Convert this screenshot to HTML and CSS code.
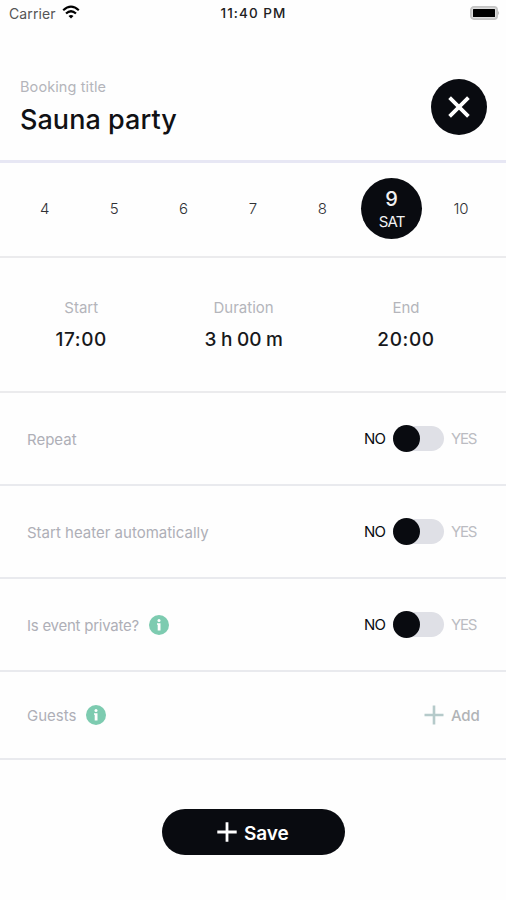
FILE: index.html
```html
<!DOCTYPE html>
<html lang="en">
<head>
<meta charset="utf-8">
<title>Booking</title>
<link rel="stylesheet" href="styles.css">
</head>
<body>
<main class="screen">
  <div class="status">
    <div class="carrier"><span class="carrier-name">Carrier</span>
      <svg class="wifi" viewBox="0 0 18 14"><path d="M1.2 5.2Q9-1.8 16.8 5.2M4 8.5Q9 4 14 8.5" fill="none" stroke="#000" stroke-width="2.2"/><path d="M6.5 10.9Q9 9 11.5 10.9L9 13.4Z"/></svg>
    </div>
    <span class="clock">11:40 PM</span>
    <svg class="battery" viewBox="0 0 30 14"><rect x=".9" y=".9" width="26.2" height="12.2" rx="3" fill="#ddd" stroke="#c4c4c4" stroke-width="1.8"/><rect x="3" y="3" width="22" height="8" rx=".5" fill="#000"/><path d="M28.2 4.8Q30 7 28.2 9.2Z" fill="#aaa"/></svg>
  </div>
  <header class="header">
    <div class="heading">
      <span class="caption">Booking title</span>
      <h1 class="title">Sauna party</h1>
    </div>
    <button class="close" aria-label="Close"><svg viewBox="0 0 22 22"><path d="M1.6 1.6L20.4 20.4M20.4 1.6L1.6 20.4" stroke="#fff" stroke-width="3.8"/></svg></button>
  </header>
  <nav class="days">
    <span class="day">4</span><span class="day">5</span><span class="day">6</span><span class="day">7</span><span class="day">8</span>
    <span class="day selected"><b class="number">9</b><span class="weekday">SAT</span></span>
    <span class="day">10</span>
  </nav>
  <section class="times">
    <div class="time"><span class="label">Start</span><span class="value start">17:00</span></div>
    <div class="time"><span class="label">Duration</span><span class="value duration">3 h 00 m</span></div>
    <div class="time"><span class="label">End</span><span class="value end">20:00</span></div>
  </section>
  <section class="row">
    <span class="name">Repeat</span>
    <div class="choice"><span class="no">NO</span><span class="track"><span class="knob"></span></span><span class="yes">YES</span></div>
  </section>
  <section class="row">
    <span class="name">Start heater automatically</span>
    <div class="choice"><span class="no">NO</span><span class="track"><span class="knob"></span></span><span class="yes">YES</span></div>
  </section>
  <section class="row">
    <span class="name private">Is event private?</span>
    <svg class="info" viewBox="0 0 20 20"><circle cx="10" cy="10" r="10" fill="#7dcbb0"/><circle cx="10" cy="5.4" r="1.5" fill="#fff"/><path d="M8 8.2H11.5V15.6H8.7V9.8H8Z" fill="#fff"/></svg>
    <div class="choice"><span class="no">NO</span><span class="track"><span class="knob"></span></span><span class="yes">YES</span></div>
  </section>
  <section class="row guests-row">
    <span class="name">Guests</span>
    <svg class="info" viewBox="0 0 20 20"><circle cx="10" cy="10" r="10" fill="#7dcbb0"/><circle cx="10" cy="5.4" r="1.5" fill="#fff"/><path d="M8 8.2H11.5V15.6H8.7V9.8H8Z" fill="#fff"/></svg>
    <button class="add"><svg class="plus" viewBox="0 0 20 20"><path d="M10 .5V19.5M.5 10H19.5" stroke="#b5caca" stroke-width="2.6"/></svg><span class="add-text">Add</span></button>
  </section>
  <footer class="footer">
    <button class="save"><svg class="plus" viewBox="0 0 20 20"><path d="M10 .3V19.7M.3 10H19.7" stroke="#fff" stroke-width="2.8"/></svg><span class="save-text">Save</span></button>
  </footer>
</main>
</body>
</html>
```
FILE: styles.css
```css
* { box-sizing: border-box; }
body { margin: 0; background: #fefefe; color: #090b10; font-family: Inter, "Liberation Sans", sans-serif; }
button { border: 0; padding: 0; font: inherit; }
svg { display: block; flex: none; }
span, h1, b { white-space: nowrap; }
.screen { width: 506px; height: 900px; overflow: hidden; display: flex; flex-direction: column; }
.status { height: 26px; padding: 0 6px 0 9px; display: grid; grid-template-columns: 1fr auto 1fr; align-items: center; }
.carrier { display: flex; align-items: center; gap: 6px; }
.carrier-name { font-size: 14px; color: #555; letter-spacing: .1px; }
.wifi { width: 18px; height: 14px; margin-top: -2px; }
.clock { margin-right: 2px; font-size: 13.5px; font-weight: 500; letter-spacing: 1.05px; color: #222; }
.battery { width: 30px; height: 14px; justify-self: end; }
.header { height: 137px; padding: 0 19px 0 20px; display: flex; justify-content: space-between; align-items: flex-start; border-bottom: 3px solid #e7e7f4; }
.heading { padding-top: 51px; display: flex; flex-direction: column; }
.caption { font-size: 14.5px; line-height: 20px; color: #b4b5bb; letter-spacing: .1px; }
.title { margin: 6px 0 0; font-size: 27px; line-height: 34px; font-weight: 500; letter-spacing: .05px; color: #101114; }
.close { width: 56px; height: 56px; margin-top: 53px; border-radius: 50%; background: #090b10; display: grid; place-items: center; }
.close svg { width: 22px; height: 22px; }
.days { height: 95px; padding: 0 10px; border-bottom: 2px solid #ebebed; display: grid; grid-template-columns: repeat(7, 69.4px); align-items: center; justify-items: center; }
.day { font-size: 15px; font-weight: 300; color: #303135; padding-bottom: 3px; }
.selected { width: 61px; height: 61px; margin-top: -3px; padding: 0; border-radius: 50%; background: #090b10; color: #f2f2f3; display: flex; flex-direction: column; align-items: center; }
.number { font-size: 20px; line-height: 24px; margin-top: 9px; font-weight: 500; }
.weekday { font-size: 15px; line-height: 20px; margin-top: 1px; font-weight: 400; letter-spacing: -.8px; }
.times { height: 135px; border-bottom: 2px solid #ebebed; display: grid; grid-template-columns: repeat(3, 162.4px); align-items: start; }
.time { padding-top: 40px; display: flex; flex-direction: column; align-items: center; }
.label { font-size: 15px; line-height: 20px; color: #b4b5bb; }
.value { margin-top: 9px; font-size: 19px; line-height: 26px; font-weight: 500; color: #17181b; }
.start { letter-spacing: .6px; }
.duration { letter-spacing: -.2px; }
.end { letter-spacing: .6px; }
.row { height: 93px; padding: 0 30px 0 27px; border-bottom: 2px solid #e9eaee; display: flex; align-items: center; }
.name { margin-top: 2px; font-size: 15px; line-height: 20px; color: #aeafb7; }
.private { letter-spacing: -.25px; }
.info { width: 20px; height: 20px; margin-left: 10px; }
.choice { margin-left: auto; display: flex; align-items: center; }
.no { width: 29px; font-size: 15px; letter-spacing: -.9px; color: #090b10; }
.track { width: 51px; height: 25px; border-radius: 13px; background: #dfe0e6; display: flex; align-items: center; }
.knob { width: 27px; height: 27px; flex: none; border-radius: 50%; background: #090b10; }
.yes { width: 25px; margin-left: 7px; font-size: 15px; letter-spacing: -1.2px; color: #bbbcc2; }
.guests-row { height: 88px; padding-right: 26px; }
.add { margin-left: auto; background: none; display: flex; align-items: center; }
.plus { width: 20px; height: 20px; }
.add-text { width: 29px; margin-left: 7px; font-size: 15px; font-weight: 500; letter-spacing: -.2px; color: #b1b4b7; text-align: left; }
.footer { padding-top: 49px; display: flex; padding-left: 162px; }
.save { width: 183px; height: 46px; padding-left: 55px; border-radius: 23px; background: #090b10; color: #fff; display: flex; align-items: center; }
.save-text { margin-left: 7px; margin-top: 2px; font-size: 19px; font-weight: 600; letter-spacing: -.1px; }
```
